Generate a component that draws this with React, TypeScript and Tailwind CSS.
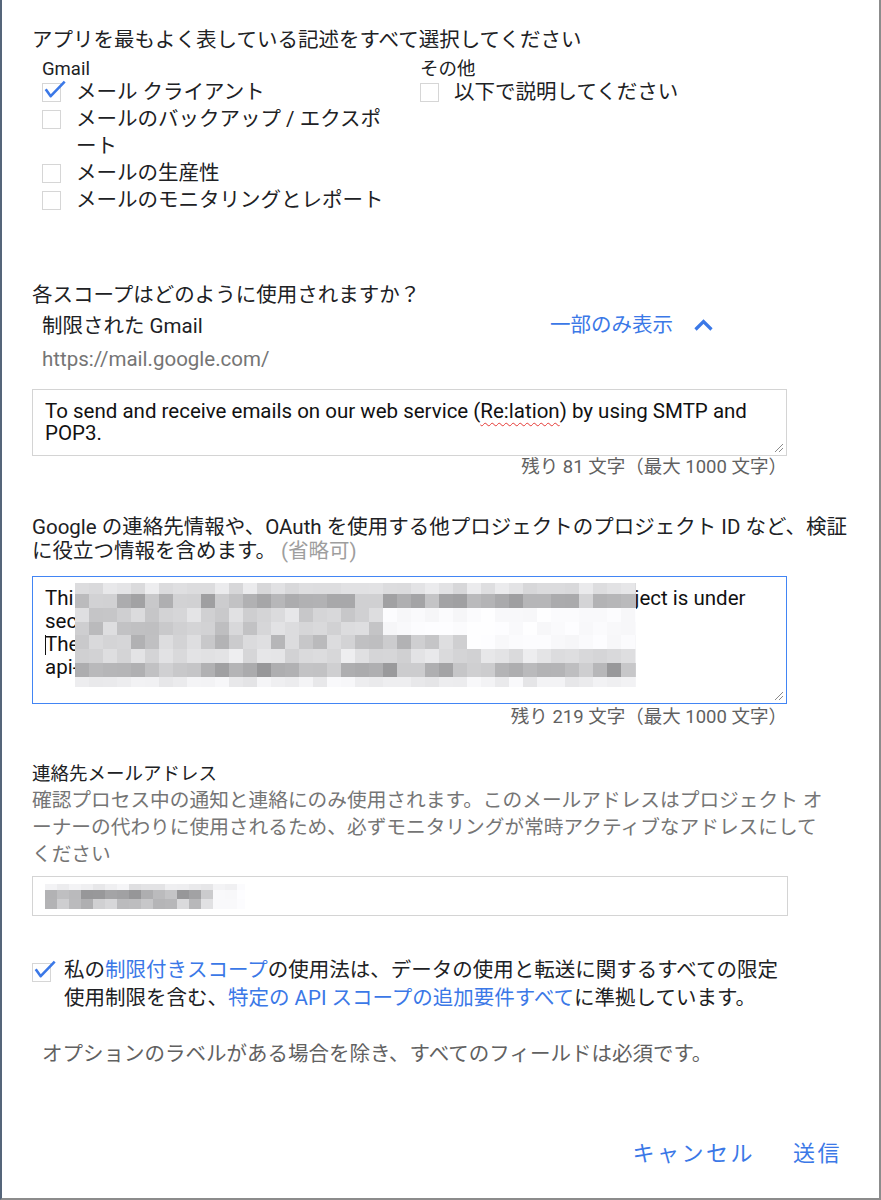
import type { ReactNode } from 'react'

// deterministic noise for the pixelated (redacted) areas
function noise(i: number) {
  const x = Math.sin(i * 12.9898 + 4.1414) * 43758.5453
  return x - Math.floor(x)
}

type MosaicRow = { h: number; lo: number; hi: number; end: number }

function Mosaic({ width, cell, rows, seed }: { width: number; cell: number; rows: MosaicRow[]; seed: number }) {
  const cols = Math.ceil(width / cell)
  const height = rows.reduce((s, r) => s + r.h, 0)
  let y = 0
  const rects: ReactNode[] = []
  rows.forEach((r, ri) => {
    for (let c = 0; c < cols; c++) {
      const x = c * cell
      const inside = x < r.end
      const n = noise(seed + ri * 97 + c * 13)
      const g = inside ? Math.round(r.lo + (r.hi - r.lo) * n) : Math.round(246 + 8 * n)
      rects.push(
        <rect key={`${ri}-${c}`} x={x} y={y} width={cell} height={r.h} fill={`rgb(${g},${g},${g + 2})`} />,
      )
    }
    y += r.h
  })
  return (
    <svg width={width} height={height} viewBox={`0 0 ${width} ${height}`} shapeRendering="crispEdges">
      {rects}
    </svg>
  )
}

function Box({ checked }: { checked?: boolean }) {
  return (
    <span className="relative block w-[19px] h-[19px] shrink-0 border-[1.5px] border-[#d6d6d6] bg-white">
      {checked && (
        <svg className="absolute -left-[1.5px] -top-[6.5px]" width="26" height="26" viewBox="0 0 26 26">
          <path d="M3.7 11.3 L8.7 18.2 L22.7 3.7" fill="none" stroke="#3b78e7" strokeWidth="2.6" strokeLinejoin="round" />
        </svg>
      )}
    </span>
  )
}

function Grip() {
  return (
    <svg className="absolute right-[2px] bottom-[2px]" width="12" height="12" viewBox="0 0 12 12">
      <path d="M11 3 L3 11 M11 7 L7 11" stroke="#8a8a8a" strokeWidth="1" />
    </svg>
  )
}

function Option({ label, checked }: { label: string; checked?: boolean }) {
  return (
    <div className="flex items-start gap-[15px] leading-[27px]">
      <span className="pt-[4px]">
        <Box checked={checked} />
      </span>
      <span className="w-[310px]">{label}</span>
    </div>
  )
}

export default function App() {
  return (
    <div className="w-[881px] h-[1200px] bg-white border-l-2 border-l-[#55657a] border-r-2 border-r-[#8c8c8c] border-b-2 border-b-[#8c8c8c] font-['Roboto','Noto_Sans_CJK_JP',sans-serif] text-[#202124] text-[20.5px] flex flex-col">
      <div className="pl-[30px] w-[854px] pt-[26px]">
        <h2 className="leading-[28px]">アプリを最もよく表している記述をすべて選択してください</h2>

        <div className="grid grid-cols-[378px_1fr] pl-[10px] pt-[5px]">
          <div>
            <div className="text-[18.5px] leading-[20px]">Gmail</div>
            <Option label="メール クライアント" checked />
            <Option label="メールのバックアップ / エクスポート" />
            <Option label="メールの生産性" />
            <Option label="メールのモニタリングとレポート" />
          </div>
          <div>
            <div className="text-[18.5px] leading-[20px]">その他</div>
            <Option label="以下で説明してください" />
          </div>
        </div>

        <h2 className="mt-[67px] leading-[28px]">各スコープはどのように使用されますか？</h2>
        <div className="mt-[3px] ml-[10px] w-[672px] flex items-center justify-between leading-[28px]">
          <span>制限された Gmail</span>
          <span className="flex items-center gap-[20px] text-[#3b78e7] -mt-[3px]">
            一部のみ表示
            <svg width="21" height="14" viewBox="0 0 21 14">
              <path d="M2.5 11.5 L10.5 3.5 L18.5 11.5" fill="none" stroke="#3b78e7" strokeWidth="3.2" />
            </svg>
          </span>
        </div>
        <div className="ml-[10px] mt-[7px] leading-[24px] text-[#757575]">https://mail.google.com/</div>

        <div className="relative mt-[18px] w-[755px] h-[67px] border border-[#d4d4d4] px-[12px] pt-[10px] leading-[22px] text-[#111]">
          To send and receive emails on our web service (
          <span className="underline decoration-wavy decoration-[#e53935] decoration-1 underline-offset-[4px]">Re:lation</span>
          ) by using SMTP and POP3.
          <Grip />
        </div>
        <div className="w-[755px] text-right text-[18.5px] leading-[20px] text-[#616161] mt-[1px]">
          残り 81 文字（最大 1000 文字）
        </div>

        <p className="mt-[38px] leading-[24px] w-[822px]">
          Google の連絡先情報や、OAuth を使用する他プロジェクトのプロジェクト ID など、検証に役立つ情報を含めます。
          <span className="text-[#9e9e9e]"> (省略可)</span>
        </p>

        <div className="relative mt-[13px] w-[755px] h-[128px] border-[1.5px] border-[#4285f4] px-[12px] pt-[10px] leading-[23px] text-[#111]">
          <div>
            Thi<span className="inline-block w-[561px]" />ject is under
          </div>
          <div>sec</div>
          <div className="flex items-center">
            <span className="inline-block w-px h-[20px] bg-[#111] -mr-px" />
            The
          </div>
          <div>api-</div>
          <div className="absolute left-[42px] top-[6px]">
            <Mosaic
              width={561}
              cell={14}
              seed={11}
              rows={[
                { h: 11, lo: 214, hi: 238, end: 561 },
                { h: 14, lo: 158, hi: 214, end: 561 },
                { h: 14, lo: 196, hi: 236, end: 297 },
                { h: 13, lo: 178, hi: 226, end: 297 },
                { h: 14, lo: 176, hi: 226, end: 380 },
                { h: 14, lo: 206, hi: 242, end: 561 },
                { h: 14, lo: 150, hi: 210, end: 561 },
                { h: 10, lo: 228, hi: 250, end: 561 },
              ]}
            />
          </div>
          <Grip />
        </div>
        <div className="w-[755px] text-right text-[18.5px] leading-[20px] text-[#616161] mt-[3px]">
          残り 219 文字（最大 1000 文字）
        </div>

        <h3 className="mt-[34px] text-[18.5px] leading-[26px]">連絡先メールアドレス</h3>
        <p className="leading-[27px] text-[19.7px] text-[#757575] w-[800px]">
          確認プロセス中の通知と連絡にのみ使用されます。このメールアドレスはプロジェクト オーナーの代わりに使用されるため、必ずモニタリングが常時アクティブなアドレスにしてください
        </p>
        <div className="mt-[8px] w-[756px] h-[40px] border border-[#d4d4d4] pl-[12px] flex items-center">
          <Mosaic
            width={200}
            cell={12}
            seed={53}
            rows={[
              { h: 6, lo: 222, hi: 246, end: 190 },
              { h: 9, lo: 150, hi: 205, end: 168 },
              { h: 10, lo: 175, hi: 225, end: 168 },
            ]}
          />
        </div>

        <div className="mt-[40px] flex items-start gap-[13px] leading-[28px]">
          <span className="pt-[7px]">
            <Box checked />
          </span>
          <p className="w-[722px]">
            私の<span className="text-[#3b78e7]">制限付きスコープ</span>の使用法は、データの使用と転送に関するすべての限定使用制限を含む、
            <span className="text-[#3b78e7]">特定の API スコープの追加要件すべて</span>に準拠しています。
          </p>
        </div>

        <p className="mt-[28px] ml-[10px] leading-[28px] text-[#616161]">
          オプションのラベルがある場合を除き、すべてのフィールドは必須です。
        </p>
      </div>

      <div className="mt-[71px] flex justify-end gap-[38px] pr-[37px] text-[22px] tracking-[2.5px] leading-[30px] text-[#3b78e7]">
        <span>キャンセル</span>
        <span>送信</span>
      </div>
    </div>
  )
}
